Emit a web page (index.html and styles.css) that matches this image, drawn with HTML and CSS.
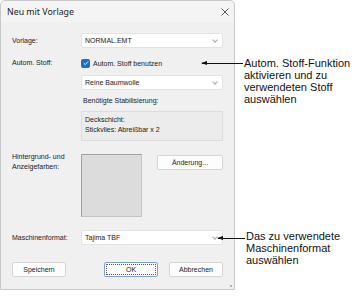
FILE: index.html
```html
<!DOCTYPE html>
<html lang="de">
<head>
  <meta charset="UTF-8">
  <title>Neu mit Vorlage</title>
  <link rel="stylesheet" href="styles.css">
</head>
<body>
  <div class="canvas">
    <!-- Dialog -->
    <div class="dialog">
      <div class="titlebar">
        <span class="title">Neu mit Vorlage</span>
        <svg class="close" width="8" height="8" viewBox="0 0 8 8"><path d="M0.5 0.5 L7.5 7.5 M7.5 0.5 L0.5 7.5" stroke="#333" stroke-width="0.8"/></svg>
      </div>

      <div class="content">
        <div class="row row-vorlage">
          <span class="label">Vorlage:</span>
          <div class="select"><span>NORMAL.EMT</span><span class="chev"></span></div>
        </div>

        <div class="row row-stoff">
          <span class="label">Autom. Stoff:</span>
          <label class="check">
            <span class="box">
              <svg width="8" height="8" viewBox="0 0 8 8"><path d="M1.8 4.2 L3.3 5.6 L6.2 2.4" fill="none" stroke="#fff" stroke-width="0.9"/></svg>
            </span>
            Autom. Stoff benutzen
          </label>
        </div>

        <div class="row row-fabric">
          <span class="label"></span>
          <div class="select"><span>Reine Baumwolle</span><span class="chev"></span></div>
        </div>

        <div class="row row-stab">
          <span class="label"></span>
          <span class="sublabel">Benötigte Stabilisierung:</span>
        </div>

        <div class="row row-info">
          <span class="label"></span>
          <div class="infobox">Deckschicht:<br>Stickvlies: Abreißbar x 2</div>
        </div>

        <div class="row row-colors">
          <span class="label">Hintergrund- und<br>Anzeigefarben:</span>
          <div class="colors">
            <div class="swatch"></div>
            <button class="btn btn-change">Änderung...</button>
          </div>
        </div>

        <div class="row row-machine">
          <span class="label">Maschinenformat:</span>
          <div class="select"><span>Tajima TBF</span><span class="chev"></span></div>
        </div>

        <div class="actions">
          <button class="btn">Speichern</button>
          <div class="actions-right">
            <button class="btn btn-ok"><span>OK</span></button>
            <button class="btn">Abbrechen</button>
          </div>
        </div>
      </div>
      <span class="grip"></span>
    </div>

    <!-- Callouts -->
    <div class="callout callout-stoff">
      <span class="arrow"></span>
      <p>Autom. Stoff-Funktion<br>aktivieren und zu<br>verwendeten Stoff<br>auswählen</p>
    </div>
    <div class="callout callout-machine">
      <span class="arrow"></span>
      <p>Das zu verwendete<br>Maschinenformat<br>auswählen</p>
    </div>
  </div>
</body>
</html>
```

FILE: styles.css
```css
* {
  box-sizing: border-box;
}
body {
  margin: 0;
  background-color: #fff;
  font-family: "Liberation Sans", Arial, sans-serif;
}
.canvas {
  position: relative;
  width: 355px;
  height: 298px;
}

/* Dialog */
.dialog {
  position: relative;
  width: 235px;
  height: 290px;
  background-color: #f0f0f0;
  border: 1px solid #c8c8c8;
  border-radius: 5px 5px 0 0;
  font-size: 7px;
  color: #1a1a1a;
}
.titlebar {
  display: flex;
  justify-content: space-between;
  align-items: center;
  height: 21px;
  padding: 0 5px 0 6px;
  background-color: #f4f4f4;
  border-radius: 5px 5px 0 0;
}
.title {
  font-family: "Noto Sans", sans-serif;
  font-size: 8.8px;
  color: #222;
}
.close {
  margin-top: 1px;
}
.content {
  padding: 11px 10px 0 11px;
}
.row {
  display: grid;
  grid-template-columns: 69px 142px;
  align-items: center;
}
.label {
  line-height: 10px;
}
.row-stoff {
  margin-top: 10px;
}
.row-fabric {
  margin-top: 7px;
}
.row-stab {
  margin-top: 6px;
}
.row-info {
  margin-top: 5px;
}
.row-colors {
  margin-top: 10px;
  align-items: start;
}
.row-colors .label {
  margin-top: 1px;
}
.row-machine {
  margin-top: 13px;
}

.select {
  position: relative;
  height: 15px;
  display: flex;
  align-items: center;
  padding-left: 3px;
  background-color: #fff;
  border: 1px solid #e2e2e2;
  border-radius: 2px;
}
.chev {
  position: absolute;
  right: 5px;
  top: 4px;
  width: 4px;
  height: 4px;
  border-right: 1px solid #a8a8a8;
  border-bottom: 1px solid #a8a8a8;
  transform: rotate(45deg);
}

.check {
  display: flex;
  align-items: center;
  gap: 3px;
  height: 10px;
}
.box {
  display: flex;
  align-items: center;
  justify-content: center;
  width: 9px;
  height: 9px;
  background-color: #1a6fc9;
  border-radius: 2px;
}
.sublabel {
  padding-left: 2px;
  line-height: 10px;
}
.infobox {
  height: 30px;
  padding: 3px 3px;
  line-height: 10px;
  background-color: #ececec;
  border: 1px solid #dcdcdc;
}

.colors {
  display: flex;
  align-items: flex-start;
  gap: 15px;
}
.swatch {
  width: 61px;
  height: 63px;
  margin-top: 3px;
  background-color: #dcdcdc;
  border: 1px solid #c4c4c4;
  border-top-color: #a0a0a0;
  border-left-color: #a0a0a0;
}
.btn {
  height: 15px;
  width: 54px;
  padding: 0;
  font-family: "Liberation Sans", Arial, sans-serif;
  font-size: 7px;
  color: #1a1a1a;
  background-color: #fdfdfd;
  border: 1px solid #d4d4d4;
  border-radius: 2px;
}
.btn-change {
  width: 66px;
  margin-top: 4px;
}
.btn-ok {
  display: flex;
  align-items: center;
  justify-content: center;
  border-color: #7aa3d0;
}
.btn-ok span {
  display: flex;
  align-items: center;
  justify-content: center;
  width: 50px;
  height: 11px;
  border: 1px dotted #555;
}

.actions {
  display: flex;
  justify-content: space-between;
  margin-top: 17px;
  padding-right: 1px;
}
.actions-right {
  display: flex;
  gap: 11px;
}
.grip {
  position: absolute;
  right: 2px;
  bottom: 2px;
  width: 2px;
  height: 2px;
  background-color: #b0b0b0;
}

/* Callouts */
.callout {
  position: absolute;
  display: flex;
  align-items: flex-start;
}
.callout p {
  margin: 0;
  font-size: 11px;
  line-height: 12px;
  color: #111;
}
.arrow {
  position: relative;
  height: 1px;
  margin-top: 6px;
  margin-right: 1px;
  background-color: #111;
}
.arrow::before {
  content: "";
  position: absolute;
  left: -1px;
  top: -2px;
  border-right: 6px solid #111;
  border-top: 2.5px solid transparent;
  border-bottom: 2.5px solid transparent;
}
.callout-stoff {
  left: 202px;
  top: 57px;
}
.callout-stoff .arrow {
  width: 41px;
}
.callout-machine {
  left: 218px;
  top: 230px;
}
.callout-machine .arrow {
  width: 27px;
  margin-top: 8px;
}
```
